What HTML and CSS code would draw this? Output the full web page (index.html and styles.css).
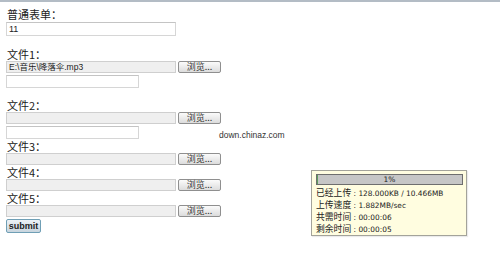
FILE: index.html
```html
<!DOCTYPE html>
<html lang="zh-CN">
<head>
  <meta charset="UTF-8">
  <title>上传表单</title>
  <link rel="stylesheet" href="styles.css">
</head>
<body>

<div class="chrome-line"></div>

<form class="upload-form">
  <div class="label">普通表单：</div>
  <input class="text-field wide" type="text" value="11">
  <div class="blank"></div>

  <div class="label">文件1：</div>
  <div class="file-row">
    <div class="file-box">E:\音乐\降落伞.mp3</div>
    <button type="button" class="browse">浏览...</button>
  </div>
  <input class="text-field short" type="text">
  <div class="blank small"></div>

  <div class="label">文件2：</div>
  <div class="file-row">
    <div class="file-box"></div>
    <button type="button" class="browse">浏览...</button>
  </div>
  <div class="note-row">
    <input class="text-field short" type="text">
    <span class="watermark">down.chinaz.com</span>
  </div>

  <div class="label">文件3：</div>
  <div class="file-row">
    <div class="file-box"></div>
    <button type="button" class="browse">浏览...</button>
  </div>

  <div class="label">文件4：</div>
  <div class="file-row">
    <div class="file-box"></div>
    <button type="button" class="browse">浏览...</button>
  </div>

  <div class="label">文件5：</div>
  <div class="file-row">
    <div class="file-box"></div>
    <button type="button" class="browse">浏览...</button>
  </div>

  <button type="submit" class="submit">submit</button>
</form>

<div class="progress-panel">
  <div class="progress-bar">
    <div class="progress-fill" style="width: 1%"></div>
    <span class="progress-text">1%</span>
  </div>
  <p><span class="key">已经上传</span> : 128.000KB / 10.466MB</p>
  <p><span class="key">上传速度</span> : 1.882MB/sec</p>
  <p><span class="key">共需时间</span> : 00:00:06</p>
  <p><span class="key">剩余时间</span> : 00:00:05</p>
</div>

</body>
</html>
```

FILE: styles.css
```css
body {
  margin: 0;
  padding: 0;
  background-color: #fff;
  color: #222;
  font-family: "Liberation Sans", "Noto Sans CJK SC", sans-serif;
}

.chrome-line {
  height: 2px;
  background-color: #b3bcc5;
}

.upload-form {
  display: flex;
  flex-direction: column;
  align-items: flex-start;
  padding: 6px 0 0 6px;
}

.label {
  height: 13px;
  line-height: 13px;
  padding-left: 1px;
  font-family: "Noto Sans CJK SC", sans-serif;
  font-size: 11px;
  color: #222;
}

.blank {
  height: 12px;
}

.blank.small {
  height: 11px;
}

.text-field {
  box-sizing: border-box;
  height: 13px;
  margin: 1px 0 0;
  padding: 0 2px;
  border: 1px solid #d6d6d6;
  border-top-color: #c4c4c4;
  background-color: #fff;
  font-family: "Liberation Sans", sans-serif;
  font-size: 9px;
  color: #222;
  outline: none;
}

.text-field.wide {
  width: 170px;
  height: 14px;
}

.text-field.short {
  width: 133px;
}

.file-row {
  display: flex;
  align-items: center;
  gap: 2px;
  height: 12px;
  margin-bottom: 1px;
}

.file-box {
  box-sizing: border-box;
  width: 170px;
  height: 12px;
  padding: 0 2px;
  border: 1px solid #cfcfcf;
  background-color: #efefef;
  font-family: "Liberation Sans", "Noto Sans CJK SC", sans-serif;
  font-size: 8.5px;
  line-height: 10px;
  color: #222;
  white-space: nowrap;
}

.browse {
  box-sizing: border-box;
  width: 43px;
  height: 12px;
  padding: 0;
  border: 1px solid #8f8f8f;
  border-radius: 2px;
  background: linear-gradient(#fbfbfb, #dcdcdc);
  font-family: "Noto Sans CJK SC", sans-serif;
  font-size: 9px;
  line-height: 10px;
  color: #333;
}

.note-row {
  display: flex;
  align-items: flex-start;
}

.watermark {
  margin: 5px 0 0 80px;
  font-family: "Liberation Sans", sans-serif;
  font-size: 8.5px;
  line-height: 10px;
  color: #333;
}

.submit {
  box-sizing: border-box;
  width: 35px;
  height: 14px;
  margin-top: 1px;
  padding: 0;
  border: 1px solid #6f9fb5;
  border-radius: 2px;
  background: linear-gradient(#edf2f6, #c8d5de);
  font-family: "Liberation Sans", sans-serif;
  font-size: 9px;
  font-weight: bold;
  line-height: 11px;
  color: #222;
}

.progress-panel {
  position: absolute;
  left: 311px;
  top: 170px;
  box-sizing: border-box;
  width: 156px;
  height: 66px;
  padding: 3px 3px 0 4px;
  border: 1px solid #a3a39a;
  background-color: #fffde0;
  box-shadow: 1px 1px 1px rgba(0,0,0,0.08);
}

.progress-bar {
  position: relative;
  box-sizing: border-box;
  height: 11px;
  margin-bottom: 2px;
  border: 1px solid #6e6e6e;
  background-color: #c6c6c6;
}

.progress-fill {
  height: 100%;
  background-color: #5e9e5e;
}

.progress-text {
  position: absolute;
  left: 0;
  right: 0;
  top: 0;
  text-align: center;
  font-family: "DejaVu Sans", sans-serif;
  font-size: 7.5px;
  line-height: 9px;
  color: #222;
}

.progress-panel p {
  margin: 0;
  height: 12px;
  line-height: 12px;
  font-family: "DejaVu Sans", "Noto Sans CJK SC", sans-serif;
  font-size: 7.4px;
  color: #222;
  white-space: nowrap;
}

.progress-panel .key {
  font-family: "Noto Sans CJK SC", sans-serif;
  font-size: 8.8px;
}
```
